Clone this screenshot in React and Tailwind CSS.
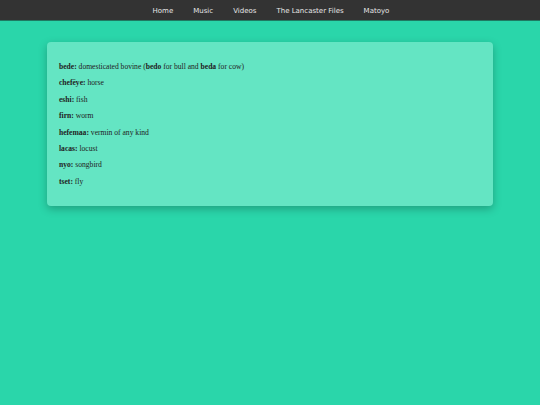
export default function App() {
  const items = [
    [["bede:"], " domesticated bovine (", ["bedo"], " for bull and ", ["beda"], " for cow)"],
    [["chefëye:"], " horse"],
    [["eshi:"], " fish"],
    [["firn:"], " worm"],
    [["hefemaa:"], " vermin of any kind"],
    [["lacas:"], " locust"],
    [["nyo:"], " songbird"],
    [["tset:"], " fly"],
  ];
  return (
    <div className="min-h-[405px] w-full bg-[#2ad6aa]">
      <nav className="h-[21px] bg-[#333333] flex items-center justify-center border-b border-[#1e7a62]" style={{ fontFamily: '"DejaVu Sans", Verdana, sans-serif' }}>
        <div className="flex text-[7px] leading-[10px] text-[#e6e6e6] pl-[2px] mt-[2px]">
          <span className="px-[10px]">Home</span>
          <span className="px-[10px]">Music</span>
          <span className="px-[10px]">Videos</span>
          <span className="px-[10px]">The Lancaster Files</span>
          <span className="px-[10px]">Matoyo</span>
        </div>
      </nav>
      <div className="px-[47px] pt-[21px]">
        <div className="bg-[#64e5c3] rounded-[4px] shadow-[0_3px_8px_rgba(0,0,0,0.25)] h-[164px] px-[12px] pt-[20px]" style={{ fontFamily: '"Liberation Serif", "Times New Roman", serif' }}>
          <div className="flex flex-col gap-[6.4px] text-[7.6px] leading-[10px] text-[#222222]">
            {items.map((row, i) => (
              <p key={i}>
                {row.map((part, j) =>
                  Array.isArray(part) ? <b key={j}>{part[0]}</b> : <span key={j}>{part}</span>
                )}
              </p>
            ))}
          </div>
        </div>
      </div>
    </div>
  );
}
